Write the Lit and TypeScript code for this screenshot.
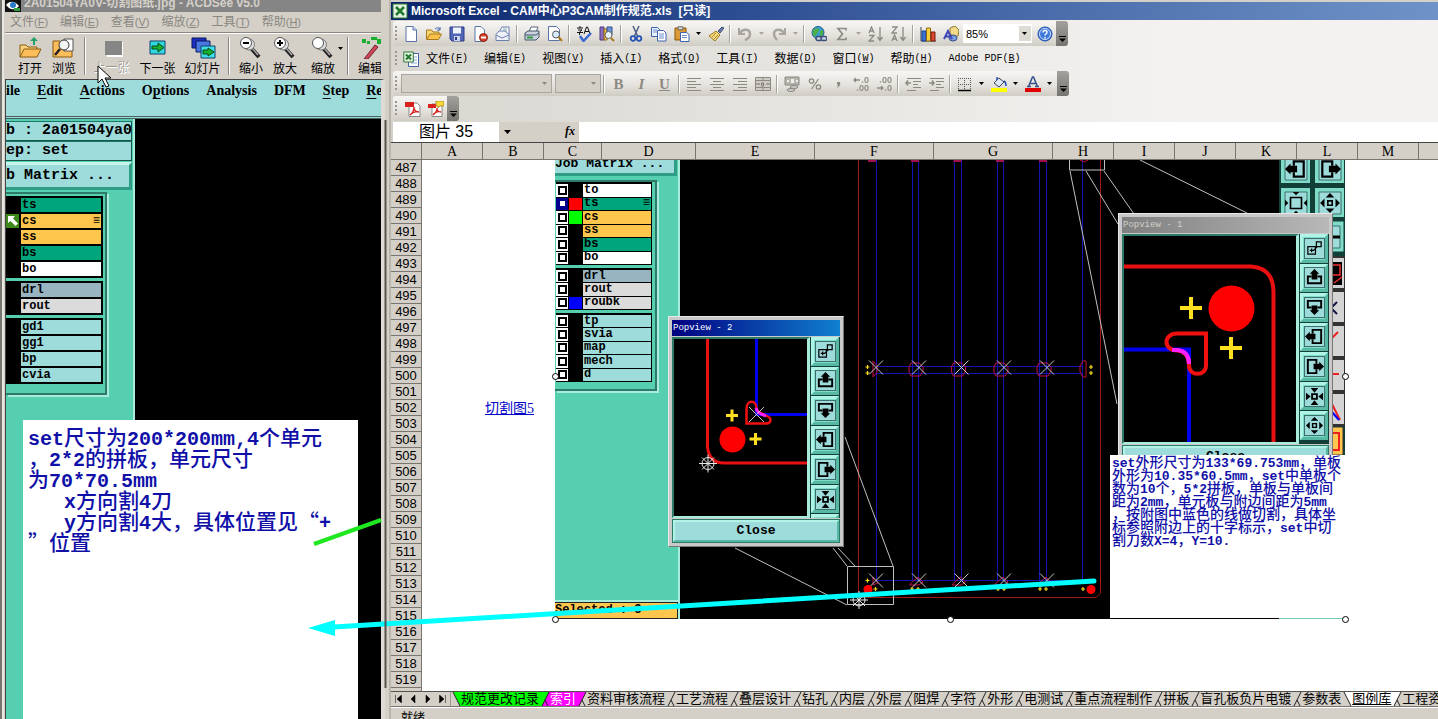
import { LitElement, html, svg, css, nothing } from "lit";
import type { TemplateResult } from "lit";
import { customElement, state } from "lit/decorators.js";
import { classMap } from "lit/directives/class-map.js";

type Layer = { name: string; tone: string; flag?: string; swatch?: string };

/* ---------- glyphs of the office toolbars, 16 x 16 ---------- */
const glyphs: Record<string, TemplateResult> = {
  new: svg`<path d="M3 .5h7l3.500 3.500v11.500H3z" fill="#fff" stroke="#5a74a8"/><path d="M10 .5V4h3.500" fill="#cfdcf2" stroke="#5a74a8"/>`,
  open: svg`<path d="M.5 13V4h5l1.500 2H13v3" fill="#f7d774" stroke="#a67a1c"/><path d="M.5 13.500L4 8h11.500l-3 5.500z" fill="#fbc14b" stroke="#a67a1c"/><path d="M9 3c2-2 4-1.500 5 1m0-3v3h-3" fill="none" stroke="#3a5fa8"/>`,
  save: svg`<path d="M1 1h14v14H3l-2-2z" fill="#5166b8" stroke="#2c3c86"/><path d="M4 1.500h8v6H4z" fill="#eef2fb"/><path d="M5 10h6v5H5z" fill="#ccd4ea"/><path d="M6 11h2v3H6z" fill="#2c3c86"/>`,
  permit: svg`<path d="M3 .5h6l3.500 3.500v11.500H3z" fill="#fff" stroke="#5a74a8"/><circle cx="11.500" cy="11.500" r="4" fill="#d6402a" stroke="#8f2010"/><path d="M9 11.500h5" stroke="#fff" stroke-width="2"/>`,
  mail: svg`<path d="M5 4.500L7 1h7v8" fill="#fff" stroke="#6a7fae"/><path d="M8 3h4M8 5h4" stroke="#8aa"/><path d="M1 8.500L4 5h6l4 3.500v6H1z" fill="#eef1f8" stroke="#6a7fae"/><path d="M1 9l6 3 7-3" fill="none" stroke="#6a7fae"/>`,
  print: svg`<path d="M5 6l2-5h7l-2 5" fill="#fff" stroke="#567"/><path d="M1 7l3-2h11v6l-3 3H1z" fill="#c9d3e0" stroke="#456"/><path d="M1 9h11l3-2" fill="none" stroke="#456"/><path d="M3 11.500h6" stroke="#2f9a3a" stroke-width="2"/>`,
  preview: svg`<path d="M1.500 .5h8l3 3v11h-11z" fill="#fff" stroke="#5a74a8"/><circle cx="9" cy="8.500" r="3.500" fill="#d8ecfa" stroke="#556"/><path d="M11.500 11l3.500 4" stroke="#a67a1c" stroke-width="2"/>`,
  spell: svg`<path d="M1 2h6M4 0v2M2 4h4L3.500 6v3M1 6.500h6" stroke="#111" fill="none"/><path d="M8 8l2.500-7h1L14 8M9 5.500h4" stroke="#111" fill="none"/><path d="M4 10l3.500 5L15 7" stroke="#3a6ad0" stroke-width="2.500" fill="none"/>`,
  research: svg`<path d="M1 1h4v13H1z" fill="#8a6bc0" stroke="#4b3a80"/><path d="M5 3h3v11H5z" fill="#f0c04a" stroke="#8f6a14"/><path d="M8 1h5v8H8z" fill="#6c93da" stroke="#34508c"/><circle cx="9.500" cy="9" r="3.500" fill="#e8f3fb" stroke="#665"/><path d="M12 12l3 3" stroke="#a67a1c" stroke-width="2"/>`,
  cut: svg`<path d="M5 0l4.500 10M11 0L6.500 10" stroke="#4b5f84" stroke-width="1.500"/><circle cx="5" cy="12.500" r="2.300" fill="none" stroke="#2450b4" stroke-width="1.700"/><circle cx="11" cy="12.500" r="2.300" fill="none" stroke="#2450b4" stroke-width="1.700"/>`,
  copy: svg`<path d="M.5 1.500h6l2 2v7h-8z" fill="#e9f0fc" stroke="#3f62ad"/><path d="M6.500 4.500h6l2.500 2.500v8H6.500z" fill="#fff" stroke="#3f62ad"/><path d="M8 8h5M8 10h5M8 12h5M2 4h4M2 6h4" stroke="#6d8fd0"/>`,
  paste: svg`<path d="M1 2h11v12H1z" fill="#dd9a35" stroke="#875509"/><path d="M4 .8h5v3H4z" fill="#d7d7d7" stroke="#666"/><path d="M6.500 6.500h6l2.500 2v7H6.500z" fill="#fff" stroke="#3f62ad"/><path d="M8 9.500h5M8 11.500h5" stroke="#6d8fd0"/>`,
  brush: svg`<path d="M10 5l4-4 2 1-4 5z" fill="#6a7fae" stroke="#3a4c78"/><path d="M1 10l7-5 4 4-5 6z" fill="#f3d77a" stroke="#9a7a24"/><path d="M4 11l4-4M6 13l4-4" stroke="#b48d2e"/>`,
  undo: svg`<path d="M2 2v6h6" fill="none" stroke="#a9a6a0" stroke-width="2"/><path d="M3 7c3-5 10-4 10 1 0 3-2 5-5 6" fill="none" stroke="#a9a6a0" stroke-width="2.500"/>`,
  redo: svg`<path d="M14 2v6H8" fill="none" stroke="#a9a6a0" stroke-width="2"/><path d="M13 7C10 2 3 3 3 8c0 3 2 5 3 6" fill="none" stroke="#a9a6a0" stroke-width="2.500"/>`,
  link: svg`<circle cx="7" cy="6.500" r="6" fill="#3c9fd0" stroke="#1d5c8a"/><path d="M3 3c3-2 6 0 5 2S5 8 4 11C1 8 1 5 3 3zM9 5l3-1v5l-3 1z" fill="#4bb04b"/><rect x="5" y="10.500" width="6" height="4" rx="2" fill="#c8cede" stroke="#3d4f78" stroke-width="1.500"/><rect x="10" y="10.500" width="6" height="4" rx="2" fill="#c8cede" stroke="#3d4f78" stroke-width="1.500"/>`,
  sum: svg`<path d="M12 4.500V2.500H4l4.500 5.500L4 13.500h8v-2" fill="none" stroke="#8d8a84" stroke-width="1.700"/>`,
  sortaz: svg`<path d="M1 7l2.500-6L6 7M2 5h3M1 9.500h5L1 15h5M12 1v13M9.500 11l2.500 3.500 2.500-3.500" fill="none" stroke="#8d8a84" stroke-width="1.300"/>`,
  sortza: svg`<path d="M1 1h5L1 7h5M1 15l2.500-6L6 15M2 13h3M12 1v13M9.500 11l2.500 3.500 2.500-3.500" fill="none" stroke="#8d8a84" stroke-width="1.300"/>`,
  chart: svg`<path d="M1 1v14h15" fill="none" stroke="#345" /><path d="M2 5h4v10H2z" fill="#3f72d8" stroke="#1d3f86"/><path d="M6.500 2h4v13h-4z" fill="#f7cf3c" stroke="#8f6a14"/><path d="M11 6h4v9h-4z" fill="#d8482e" stroke="#7c1f10"/>`,
  draw: svg`<path d="M7 2l5-2 4 4-1 6-5 1-3-4z" fill="#f2d98a" stroke="#8f7a34"/><ellipse cx="10" cy="12" rx="4" ry="3" fill="#7d9be0" stroke="#34508c"/><path d="M1 13l4-8 4 8M3 10.500h4" fill="none" stroke="#4048b8" stroke-width="2"/>`,
  help: svg`<circle cx="8" cy="8" r="7" fill="#3d78dc" stroke="#1e4fae"/><circle cx="8" cy="8" r="5.500" fill="none" stroke="#cfe0fb"/><path d="M6 6.500c0-3 4.500-2.500 4 0C9.800 8 8 8 8 9.500M8 11v1.500" fill="none" stroke="#fff" stroke-width="1.500"/>`,
  left: svg`<path d="M1 2.500h14M1 5.500h9M1 8.500h14M1 11.500h9M1 14.500h14" stroke="#8d8a84"/>`,
  center: svg`<path d="M1 2.500h14M4 5.500h8M1 8.500h14M4 11.500h8M1 14.500h14" stroke="#8d8a84"/>`,
  right: svg`<path d="M1 2.500h14M6 5.500h9M1 8.500h14M6 11.500h9M1 14.500h14" stroke="#8d8a84"/>`,
  merge: svg`<path d="M.5 1.500h15v13H.5zM.5 4.500h15M.5 11.500h15M8 1v3M8 12v3" fill="#cfccc5" stroke="#8d8a84"/><path d="M1 8h4M11 8h4M6.500 9.500V7h2v3H6.500" fill="none" stroke="#77746e"/>`,
  money: svg`<path d="M1 1h14v8H1z" fill="#b7b4ae" stroke="#8d8a84"/><path d="M3 4h2v2H3zM7 3h3v4H7zM12 4h2v2h-2z" fill="#eee"/><ellipse cx="10" cy="11" rx="4" ry="1.500" fill="#ccc" stroke="#8d8a84"/><ellipse cx="7" cy="14" rx="4" ry="1.500" fill="#ccc" stroke="#8d8a84"/>`,
  percent: svg`<circle cx="4.500" cy="5" r="2.200" fill="none" stroke="#8d8a84" stroke-width="1.300"/><circle cx="11.500" cy="11" r="2.200" fill="none" stroke="#8d8a84" stroke-width="1.300"/><path d="M11.500 3l-7 10" stroke="#8d8a84" stroke-width="1.300"/>`,
  comma: svg`<path d="M7 6h3c1 3-1 5-3 6 1-2 1-3 0-4z" fill="#8d8a84"/>`,
  moredec: svg`<path d="M7 4H1M3 2L1 4l2 2" fill="none" stroke="#8d8a84" stroke-width="1.300"/><circle cx="9.500" cy="6" r=".8" fill="#8d8a84"/><rect x="12" y="1.500" width="3" height="5" rx="1.500" fill="none" stroke="#8d8a84" stroke-width="1.200"/><circle cx="4.500" cy="14" r=".8" fill="#8d8a84"/><rect x="7" y="9.500" width="3" height="5" rx="1.500" fill="none" stroke="#8d8a84" stroke-width="1.200"/><rect x="12" y="9.500" width="3" height="5" rx="1.500" fill="none" stroke="#8d8a84" stroke-width="1.200"/>`,
  lessdec: svg`<circle cx="4.500" cy="6" r=".8" fill="#8d8a84"/><rect x="7" y="1.500" width="3" height="5" rx="1.500" fill="none" stroke="#8d8a84" stroke-width="1.200"/><rect x="12" y="1.500" width="3" height="5" rx="1.500" fill="none" stroke="#8d8a84" stroke-width="1.200"/><path d="M1 12h6M5 10l2 2-2 2" fill="none" stroke="#8d8a84" stroke-width="1.300"/><circle cx="9.500" cy="14" r=".8" fill="#8d8a84"/><rect x="12" y="9.500" width="3" height="5" rx="1.500" fill="none" stroke="#8d8a84" stroke-width="1.200"/>`,
  outdent: svg`<path d="M2 2.500h14M8 5.500h8M8 8.500h5M8 11.500h8M2 14.500h9" stroke="#8d8a84"/><path d="M6 7H1m2-2.500L1 7l2 2.500" fill="none" stroke="#8d8a84" stroke-width="1.500"/>`,
  indent: svg`<path d="M2 2.500h14M8 5.500h8M8 8.500h5M8 11.500h8M2 14.500h9" stroke="#8d8a84"/><path d="M1 7h5M4 4.500L6 7 4 9.500" fill="none" stroke="#8d8a84" stroke-width="1.500"/>`,
  borders: svg`<path d="M1.500 2v12M7.500 2v12M13.500 2v12M1 2.500h13M1 8.500h13" stroke="#555" stroke-dasharray="1 1"/><path d="M1 14.500h13" stroke="#000" stroke-width="1.500"/>`,
  fill: svg`<path d="M3 7l5-5 5 4-5 5z" fill="#dfe8f6" stroke="#345"/><path d="M6 4V1M13 5c2 1 2 3 2 5" stroke="#2450b4" stroke-width="1.500" fill="none"/><path d="M0 12h16v4H0z" fill="#ffff00"/>`,
  color: svg`<path d="M3.500 10.500L7.500 1h1l4 9.500M5 7.500h6M2 10.500h4M10 10.500h4" fill="none" stroke="#34508c" stroke-width="1.500"/><path d="M0 12h16v4H0z" fill="#e00000"/>`,
  pdf: svg`<path d="M4 2h8l3 3v10.500H4z" fill="#fff" stroke="#888"/><path d="M0 1h9v5H0z" fill="#d8201c"/><path d="M5 14c3-2 4-5 4-8 0 3 2 5 5 5-3-1-6 0-9 3z" fill="none" stroke="#d8201c" stroke-width="1.300"/>`,
  pdfmail: svg`<path d="M4 3h8l2 3v9.500H4z" fill="#fff" stroke="#888"/><path d="M0 3h8v4H0z" fill="#d8201c"/><path d="M5 14c3-2 4-5 4-7 0 3 2 4 4 4-3-1-6 0-8 3z" fill="none" stroke="#d8201c" stroke-width="1.300"/><path d="M8 0h8v5h-4l-2 2V5H8z" fill="#f8d838" stroke="#a8841c" stroke-width=".8"/>`,
  excel: svg`<path d="M1 1h14v14H1z" fill="#e6f2e2" stroke="#2f7a34"/><path d="M4 4l8 8M12 4l-8 8" stroke="#1f7a2c" stroke-width="2.500"/>`,
  workbook: svg`<path d="M5.500 2.500h10v13h-10z" fill="#fff" stroke="#4464a8"/><path d="M10 6h4M10 9h4M8 12h6" stroke="#8aa4d8"/><path d="M.8 1h9.500v10H.8z" fill="#e6f2e2" stroke="#2f7a34"/><path d="M3 3.500l5 5M8 3.500l-5 5" stroke="#1f7a2c" stroke-width="2"/>`,
};

const icon = (name: string) => html`<svg class="icon" viewBox="0 0 16 16" aria-hidden="true">${glyphs[name]}</svg>`;
const caret = html`<svg class="caret" viewBox="0 0 5 3" aria-hidden="true"><path d="M0 0h5L2.500 3z" fill="currentColor" /></svg>`;

/* ---------- viewer toolbar glyphs, 26 x 22 ---------- */
const lens = svg`<path d="M13 11l8 9" stroke="#222" stroke-width="4"/><path d="M14 11l6 7" stroke="#aaa" stroke-width="1.500"/><circle cx="11" cy="7.500" r="5.500" fill="#ddd" stroke="#777"/><circle cx="8" cy="6" r="5.500" fill="#fff" stroke="#555"/>`;
const viewerGlyphs: Record<string, TemplateResult> = {
  open: svg`<path d="M3 20V8h6l2 2h9v4" fill="#f9d37a" stroke="#8a5a10"/><path d="M3 20l4-8h17l-4 8z" fill="#fdbd5a" stroke="#8a5a10"/><path d="M16 8V4h-3l4-4 4 4h-3v4z" fill="#28a06a"/>`,
  browse: svg`<path d="M2 20V4h7l2 2h10v14z" fill="#fdbd5a" stroke="#8a5a10"/><path d="M13 2h9v12h-9z" fill="#fff" stroke="#555"/><circle cx="13" cy="8" r="5" fill="#f4f4f4" stroke="#333"/><path d="M9 12l-5 6" stroke="#222" stroke-width="2.500"/>`,
  prev: svg`<path d="M6 5h17v15H7z" fill="#fff"/><path d="M5 4h17v14H5z" fill="#868686"/>`,
  next: svg`<path d="M5 4h15v13H5z" fill="#30d8e0" stroke="#163c6a"/><path d="M7 9h6V6l6 4.500-6 4.500v-3H7z" fill="#18b030" stroke="#064c14"/>`,
  slides: svg`<path d="M2 1h14v10H2z" fill="#1c30c0" stroke="#0a1560"/><path d="M6 4h14v11H6z" fill="#4878e0" stroke="#0a1560"/><path d="M11 9h14v12H11z" fill="#40e0e8" stroke="#163c6a"/><path d="M13 13h5v-2l6 4-6 4v-2h-5z" fill="#18b030" stroke="#064c14"/>`,
  minus: svg`${lens}<path d="M5 6h6" stroke="#000" stroke-width="2"/>`,
  plus: svg`${lens}<path d="M5 6h6M8 3v6" stroke="#000" stroke-width="2"/>`,
  zoom: svg`${lens}`,
  edit: svg`<path d="M7 22L18 8l3 2L11 22z" fill="#d04858" stroke="#702030"/><path d="M5 2h4v4H5zM10 4h3v3h-3zM14 0h6v3h-6zM20 2h4v5h-4z" fill="#18b030"/>`,
};

/* ---------- CAM tool buttons, 20 x 20 ---------- */
const arrowGlyphs: Record<string, TemplateResult> = {
  copy: svg`<path d="M3 8h8v8H3zM12 3h5v5h-5zM5 12h4l4-4M7 10v4" fill="none" stroke="#000" stroke-width="1.300"/>`,
  up: svg`<path d="M7 9H3v7h14V9h-4" fill="none" stroke="#000" stroke-width="2"/><path d="M10 1l5 5h-2v6H7V6H5z"/>`,
  down: svg`<path d="M7 10H3V3h14v7h-4" fill="none" stroke="#000" stroke-width="2"/><path d="M10 18l5-5h-2V8H7v5H5z"/>`,
  left: svg`<path d="M8 7V3h9v14H8v-4" fill="none" stroke="#000" stroke-width="2"/><path d="M0 10l5-5v2h6v6H5v2z"/>`,
  right: svg`<path d="M12 7V3H3v14h9v-4" fill="none" stroke="#000" stroke-width="2"/><path d="M20 10l-5-5v2H9v6h6v2z"/>`,
  in: svg`<path d="M7.500 7.500h5v5h-5z" fill="none" stroke="#000" stroke-width="2"/><path d="M10 6L6 1h8zM10 14l-4 5h8zM6 10L1 6v8zM14 10l5-4v8z"/>`,
  out: svg`<path d="M8 8h4v4H8z" fill="none" stroke="#000" stroke-width="1.500"/><path d="M10 1l4 4H6zM10 19l4-4H6zM1 10l4-4v8zM19 10l-4-4v8z"/>`,
  frame: svg`<path d="M5 5h10v10H5z" fill="none" stroke="#000" stroke-width="1.500"/><path d="M10 3L7 0h6zM10 17l-3 3h6zM3 10L0 7v6zM17 10l3-3v6z"/>`,
};
const sideTools = ["copy", "up", "down", "left", "right", "in", "out"];

const sheets = ["规范更改记录", "索引", "资料审核流程", "工艺流程", "叠层设计", "钻孔", "内层", "外层", "阻焊", "字符", "外形", "电测试", "重点流程制作", "拼板", "盲孔板负片电镀", "参数表", "图例库", "工程资料"];
const columns: [string, number][] = [["A", 61], ["B", 61], ["C", 58], ["D", 94], ["E", 119], ["F", 119], ["G", 119], ["H", 61], ["I", 61], ["J", 61], ["K", 61], ["L", 61], ["M", 61], ["", 61]];
const rows = Array.from({ length: 34 }, (_, i) => 487 + i);

const viewLayers: Layer[][] = [
  [{ name: "ts", tone: "green" }, { name: "cs", tone: "amber", flag: "≡" }, { name: "ss", tone: "amber" }, { name: "bs", tone: "green" }, { name: "bo", tone: "white" }],
  [{ name: "drl", tone: "slate" }, { name: "rout", tone: "grey" }],
  [{ name: "gd1", tone: "aqua" }, { name: "gg1", tone: "aqua" }, { name: "bp", tone: "aqua" }, { name: "cvia", tone: "aqua" }],
];
const shotLayers: Layer[][] = [
  [{ name: "to", tone: "white" }, { name: "ts", tone: "green", flag: "≡", swatch: "red" }, { name: "cs", tone: "amber", swatch: "lime" }, { name: "ss", tone: "amber" }, { name: "bs", tone: "green" }, { name: "bo", tone: "white" }],
  [{ name: "drl", tone: "slate" }, { name: "rout", tone: "grey" }, { name: "roubk", tone: "grey", swatch: "blue" }],
  [{ name: "tp", tone: "aqua" }, { name: "svia", tone: "aqua" }, { name: "map", tone: "aqua" }, { name: "mech", tone: "aqua" }, { name: "d", tone: "aqua" }],
];

const memoLines = ["set尺寸为200*200mm,4个单元", "，2*2的拼板，单元尺寸", "为70*70.5mm", "   x方向割4刀", "   y方向割4大，具体位置见“+", "”位置"];
const noteLines = ["set外形尺寸为133*69.753mm，单板", "外形为10.35*60.5mm，set中单板个", "数为10个，5*2拼板，单板与单板间", "距为2mm，单元板与附边间距为5mm", "，按附图中蓝色的线做切割，具体坐", "标参照附边上的十字标示，set中切", "割刀数X=4，Y=10."];

/* Latin runs are set in a narrower monospaced face than the Chinese around them. */
const mixed = (line: string) => line.split(/([\x20-\x7e]+)/).filter(Boolean).map((part) => (/^[\x20-\x7e]/.test(part) ? html`<span class="latin">${part}</span>` : part));

const cross = (x: number, y: number, r: number) => svg`<path d="M${x - r} ${y - r}l${2 * r} ${2 * r}M${x + r} ${y - r}l${-2 * r} ${2 * r}" stroke="#c8c8c8" fill="none"/>`;
const plus = (x: number, y: number, r: number, w: number) => svg`<path d="M${x - r} ${y}h${2 * r}M${x} ${y - r}v${2 * r}" stroke="#ffe020" stroke-width=${w} fill="none"/>`;
const target = (x: number, y: number) => svg`<g stroke="#e8e8e8" fill="none"><circle cx=${x} cy=${y} r="6"/><path d="M${x - 9} ${y}h18M${x} ${y - 9}v18M${x - 6} ${y - 6}l12 12M${x + 6} ${y - 6}l-12 12"/></g>`;

@customElement("app-root")
export class AppRoot extends LitElement {
  @state() private sheet = "图例库";

  static styles = css`
    :host { display: block; height: 100vh; min-height: 400px; overflow: hidden; position: relative; background: #d4d0c8; color: #000; font: 12px/16px "Liberation Serif", "Noto Sans CJK SC", serif; }
    *, *::before, *::after { box-sizing: border-box; }
    button { font: inherit; color: inherit; border: 0; background: none; padding: 0; margin: 0; }
    input, select { font: inherit; margin: 0; border-radius: 0; appearance: none; }
    svg { display: block; }
    .desk { display: grid; grid-template-columns: 389px minmax(0, 1fr); height: 100%; }
    .win { min-width: 0; min-height: 0; height: 100%; display: flex; flex-direction: column; overflow: hidden; }

    /* image viewer */
    .viewer { border-left: 2px solid #77756f; background: linear-gradient(90deg, #e8e6e0 2px, #d4d0c8 2px); padding-left: 3px; }
    .viewer-title { flex: none; height: 12px; margin-right: 8px; background: #858585; color: #d4d0c8; font: bold 12px/16px "Liberation Sans", "Noto Sans CJK SC", sans-serif; display: flex; align-items: flex-end; gap: 3px; white-space: pre; overflow: hidden; }
    .viewer-title span { line-height: 18px; }
    .viewer-menu { flex: none; display: flex; height: 20px; align-items: center; gap: 12px; padding-left: 5px; color: #8a8780; font: 11px/16px "Liberation Sans", "Noto Sans CJK SC", sans-serif; }
    .viewer-menu b { font-weight: 400; font-size: 12px; }
    .viewer-tools { flex: none; display: flex; height: 47px; border-top: 1px solid #8a8780; box-shadow: inset 0 1px #fff; margin-right: 8px; padding: 4px 0 0 8px; overflow: hidden; }
    .vt { flex: none; width: 34px; display: flex; flex-direction: column; align-items: center; gap: 2px; white-space: nowrap; position: relative; }
    .vt.wide { width: 45px; }
    .vt.drop { width: 42px; }
    .vt.drop .caret { position: absolute; right: 1px; top: 10px; }
    .vt.off { color: #fff; text-shadow: -1px -1px #9a978f; }
    .vt > svg:first-child { width: 26px; height: 22px; }
    .rule { flex: none; width: 2px; margin: 0 4px 4px 3px; background: linear-gradient(90deg, #8a8780 1px, #fff 1px); }
    .viewer-body { flex: 1; min-height: 0; display: flex; margin-right: 4px; border-right: 4px solid #dedbd5; border-left: 1px solid #444; border-top: 1px solid #444; position: relative; flex-direction: column; background: #000; overflow: hidden; }
    .cam-menu { flex: none; height: 39px; background: #9edbdb; border-bottom: 3px double #46605f; padding: 2px 0 0 0; display: flex; gap: 17px; font: bold 14px/18px "Liberation Serif", serif; white-space: nowrap; overflow: hidden; }
    .cam-menu u { text-underline-offset: 3px; }
    .cam-side { flex: 1; min-height: 0; width: 129px; background: #55cfaf; border-right: 2px solid #a9ecdc; overflow: hidden; font: bold 15px/18px "Liberation Mono", monospace; padding-top: 2px; }
    .field { height: 20px; background: #9edbdb; border: 1px solid #14564a; border-left: 0; border-top-color: #1c7866; margin-right: 1px; display: flex; align-items: center; overflow: hidden; white-space: pre; }
    .matrix { display: block; width: 126px; height: 28px; margin: 1px 0 2px; background: #9edbdb; border: 3px solid #2f9c86; border-top-color: #c6f6ec; border-left: 0; text-align: left; font: inherit; white-space: pre; overflow: hidden; }
    .stack { display: flex; flex-direction: column; gap: 3px; border: 2px solid #2d7a69; border-left: 0; padding: 2px 2px 9px 0; width: 101px; box-shadow: 2px 2px #a9ecdc; font: bold 12px/12px "Liberation Mono", monospace; }
    .group { background: #000; padding: 1px 1px 1px 0; }
    .row { display: grid; grid-template-columns: 15px 1fr; height: 16px; padding: 1px; padding-left: 0; }
    .tag { display: flex; justify-content: space-between; padding: 0 1px; overflow: hidden; align-items: center; }
    .green { background: #00a57b; } .amber { background: #ffc64e; } .white { background: #fff; } .slate { background: #98b4c0; } .grey { background: #dbdbdb; } .aqua { background: #9edbdb; }
    .mark { background: #3d8818; width: 13px; height: 14px; }
    .memo { position: absolute; left: 17px; top: 340px; width: 335px; bottom: 0; background: #fff; color: #1010a8; font: 500 21px/21px "Noto Sans CJK SC", sans-serif; white-space: pre; padding: 6px 0 0 5px; }
    .memo p { margin: 0; height: 21px; }
    .latin { font-family: "Liberation Mono", monospace; font-weight: 700; }
    .memo .latin { font-size: 20px; }
    .note .latin { font-size: 13px; }

    /* spreadsheet window */
    .excel { border-left: 2px solid #b8b4ac; padding-top: 2px; background: #d4d0c8; }
    .x-title { flex: none; height: 18px; display: flex; align-items: center; gap: 3px; padding-left: 1px; background: linear-gradient(90deg, #0a246a, #2a4a90 30%, #6f93c8); color: #fff; font: bold 12px/18px "Liberation Sans", "Noto Sans CJK SC", sans-serif; white-space: pre; }
    .dock { flex: none; background: linear-gradient(90deg, #d9d6d0, #f3f2f0 75%); padding: 1px 2px; }
    .icon { width: 16px; height: 16px; flex: none; }
    .bar { display: flex; height: 25px; width: max-content; padding-left: 6px; border-radius: 3px; background: linear-gradient(#f7f6f4, #e4e1dc 60%, #cfccc4); position: relative; align-items: center; }
    .bar::before { content: ""; position: absolute; left: 2px; top: 5px; width: 2px; height: 15px; background: repeating-linear-gradient(#9c9890 0 2px, transparent 2px 4px); }
    .bar.plain { background: none; }
    .bar.format, .bar.pdf { padding-left: 8px; }
    .bar.format .cap { margin-left: 2px; }
    .tb { flex: none; width: 23px; height: 23px; display: grid; place-items: center; color: #8d8a84; font: bold 15px/20px "Liberation Serif", serif; }
    .dd { flex: none; width: 11px; height: 23px; display: grid; place-items: center; color: #000; }
    .dd.off { color: #a9a6a0; }
    .caret { width: 5px; height: 3px; }
    .sep { flex: none; width: 6px; height: 18px; background: linear-gradient(90deg, transparent 2px, #a5a29a 2px 3px, #fff 3px 4px, transparent 4px); }
    .cap { flex: none; width: 12px; height: 25px; background: linear-gradient(#a3a19c, #77756f); border-radius: 0 3px 3px 0; display: flex; align-items: flex-end; justify-content: center; padding-bottom: 4px; color: #000; }
    .cap svg { width: 7px; height: 6px; }
    .box { position: relative; display: flex; align-items: center; height: 19px; border: 1px solid #a9a6a0; background: #d4d0c8; margin-right: 3px; }
    .box select { width: 100%; height: 100%; border: 0; background: none; padding: 0 2px; outline: 0; color: inherit; font: 11px/14px "Liberation Sans", sans-serif; }
    .box .caret { position: absolute; right: 4px; pointer-events: none; color: #8d8a84; }
    .box.font { width: 151px; }
    .box.size { width: 46px; margin-right: 0; }
    .box.zoom { width: 69px; background: #fff; border: 1px solid #fff; margin: 0 1px; }
    .box.zoom .caret { color: #000; z-index: 1; }
    .box.zoom::after { content: ""; position: absolute; right: 0; width: 12px; height: 15px; background: #dedbd5; }
    .menu { display: flex; gap: 16px; padding-left: 4px; }
    .menu button { display: flex; align-items: center; white-space: pre; }
    .menu .key { font: 10px/16px "Liberation Mono", monospace; }
    .formula { flex: none; display: flex; height: 20px; align-items: stretch; background: #d4d0c8; padding-left: 2px; font-size: 16px; }
    .namebox { width: 106px; border: 0; padding: 0; text-align: center; background: #fff; font: 16px/18px "Liberation Sans", "Noto Sans CJK SC", sans-serif; }
    .name-dd { width: 16px; display: grid; place-items: center; }
    .name-dd svg { width: 7px; height: 4px; }
    .fx { margin-left: 50px; width: 14px; font: italic bold 12px/18px "Liberation Serif", serif; }
    .fx-input { flex: 1; min-width: 0; border: 0; background: #fff; }
    .sheet { flex: 1; min-height: 0; position: relative; overflow: hidden; background: #fff; border-top: 1px solid #444; }
    table { border-collapse: separate; border-spacing: 0; table-layout: fixed; width: 100%; min-width: 1088px; }
    th { font: 13px/15px "Liberation Sans", sans-serif; background: #d4d0c8; padding: 0; height: 16px; border-right: 1px solid #77756f; border-bottom: 1px solid #77756f; overflow: hidden; }
    thead th { height: 17px; font: 14px/16px "Liberation Serif", serif; padding-top: 1px; line-height: 15px; }
    td { padding: 0 0 0 2px; height: 16px; font: 14px/15px "Liberation Serif", "Noto Sans CJK SC", serif; white-space: nowrap; }
    td a { color: #0000c8; text-decoration: underline; display: block; height: 15px; }

    .shot { position: absolute; left: 164px; top: 17px; width: 790px; height: 459px; background: #000; }
    .art { position: absolute; left: 0; top: 0; width: 790px; height: 459px; overflow: visible; }
    .shot-side { position: absolute; left: 0; top: 0; bottom: 0; width: 125px; background: #55cfaf; border-right: 2px solid #a9ecdc; overflow: hidden; display: flex; flex-direction: column; }
    .shot-side .matrix { flex: none; width: 122px; height: 16px; margin: 0 0 4px; padding: 0; font: bold 13px/8px "Liberation Mono", monospace; border-top: 0; border-bottom-width: 3px; padding-bottom: 6px; }
    .shot-side .stack { width: 102px; padding: 0 3px 7px 1px; gap: 3px; }
    .shot-side .group { display: grid; grid-auto-rows: 1fr; padding: 1px 0; }
    .n6 { height: 83px; } .n3 { height: 42px; } .n5 { height: 69px; }
    .shot-side .row { height: auto; min-height: 0; grid-template-columns: 12px 13px 1fr; gap: 1px; padding: 1px 1px 0 0; line-height: 11px; }
    .pick { width: 12px; height: 100%; background: #fff; border: 0; display: grid; place-items: center; }
    .pick::before { content: ""; width: 9px; height: 9px; border: 2px solid #000; background: #fff; }
    .pick:checked { background: #00008c; }
    .pick:checked::before { border-color: #00008c; }
    .swatch.red { background: #f00; } .swatch.lime { background: #0f0; } .swatch.blue { background: #00f; }
    .selected { margin-top: auto; height: 17px; background: #ffc64e; border: 1px solid #222; border-left: 0; font: bold 12px/14px "Liberation Mono", monospace; white-space: pre; box-shadow: 0 -2px #a9ecdc; }

    .pop { position: absolute; display: grid; grid-template-rows: 16px 1fr 24px; grid-template-columns: 1fr 30px; padding: 3px; background: #c9c9c9; border: 1px solid #e8e8e8; border-right-color: #777; border-bottom-color: #777; row-gap: 1px; }
    .pop.two { left: 113px; top: 156px; width: 176px; height: 231px; }
    .pop.one { left: 563px; top: 53px; width: 215px; height: 260px; }
    .pop-title { grid-column: 1 / 3; background: linear-gradient(90deg, #000080, #1080d0); color: #fff; font: 9px/16px "Liberation Mono", monospace; white-space: pre; padding-left: 1px; }
    .one .pop-title { background: linear-gradient(90deg, #808080, #b8b8b8); color: #d4d0c8; }
    .pop-canvas { background: #000; border: 2px solid #2d7a69; border-right: 3px solid #a9ecdc; border-bottom-color: #a9ecdc; overflow: hidden; min-width: 0; min-height: 0; }
    .pop-tools { overflow: hidden; min-height: 0; background: #123f38; }
    .pop-strip { display: grid; grid-template-rows: repeat(7, 1fr); height: 206px; row-gap: 1px; padding: 0 1px; }
    .gen { background: #7fdcc8; border: 3px solid #57b8a4; border-top-color: #b0f4e8; border-left-color: #b0f4e8; display: grid; place-items: center; min-height: 0; }
    .gen svg { width: 19px; height: 19px; background: #9edbdb; box-shadow: 0 0 0 1px #3c6f6a; }
    .close { grid-column: 1 / 3; background: #9edbdb; border: 3px solid #57b8a4; border-top-color: #b0f4e8; border-left-color: #b0f4e8; outline: 1px solid #2d7a69; outline-offset: -1px; font: bold 13px/14px "Liberation Mono", monospace; }
    .note { position: absolute; left: 555px; top: 295px; width: 235px; height: 163px; background: #fff; color: #1010a8; font: 500 14px/13px "Noto Sans CJK SC", sans-serif; padding-left: 2px; white-space: pre; }
    .note p { margin: 0; height: 13px; }

    .tabs { flex: none; display: flex; height: 16px; border-top: 1px solid #55534d; border-bottom: 1px solid #77756f; background: #d4d0c8; overflow: hidden; font: 13px/14px "Liberation Serif", "Noto Sans CJK SC", serif; }
    .nav { flex: none; width: 60px; display: flex; justify-content: space-between; align-items: center; padding: 0 4px; border-right: 1px solid #9c9890; }
    .nav svg { width: 7px; height: 8px; }
    .tab { flex: none; padding: 0 1px 0 10px; white-space: nowrap; background: #d4d0c8; position: relative; height: 14px; line-height: 14px; }
    .tab svg { position: absolute; left: 0; top: 0; width: 10px; height: 14px; }
    .tab.index { color: #fff; background: #ff00ff; }
    .tab.record { background: #00ff00; }
    .tab.active { background: #fff; text-decoration: underline; }
    .status { flex: none; height: 12px; overflow: hidden; border-top: 1px solid #fff; padding: 2px 0 0 10px; line-height: 16px; }
    .arrows { position: absolute; left: 0; top: 0; width: 100%; height: 100%; pointer-events: none; }
  `;

  private tb(name: string) {
    return html`<button class="tb" title=${name}>${icon(name)}</button>`;
  }
  private dd(off = false) {
    return html`<button class=${classMap({ dd: true, off })} aria-label="more">${caret}</button>`;
  }
  private sep = html`<span class="sep"></span>`;
  private cap = html`<button class="cap" aria-label="options"><svg viewBox="0 0 7 6"><path d="M0 .5h7" stroke="#000" /><path d="M0 2.500h7L3.500 6z" /></svg></button>`;

  private viewTool(glyph: string, label: string, kind = "") {
    return html`<button class="vt ${kind}"><svg viewBox="0 0 26 22">${viewerGlyphs[glyph]}</svg><span>${label}</span>${kind === "drop" ? caret : nothing}</button>`;
  }

  private viewer() {
    return html`<section class="win viewer">
      <header class="viewer-title">
        <svg width="16" height="12" viewBox="0 0 16 12"><path d="M0 0h16v12H0z" fill="#111" /><path d="M1 5c4-5 9-4 13 1-5 5-9 4-13-1z" fill="#fff" /><circle cx="8" cy="5" r="3" fill="#2878c8" /><path d="M9 8h6v3H9z" fill="#30a040" /></svg>
        <span>2A01504YA0V-切割图纸.jpg - ACDSee v5.0</span>
      </header>
      <nav class="viewer-menu">
        ${[["文件", "F"], ["编辑", "E"], ["查看", "V"], ["缩放", "Z"], ["工具", "T"], ["帮助", "H"]].map(([t, k]) => html`<button><b>${t}</b>(<u>${k}</u>)</button>`)}
      </nav>
      <div class="viewer-tools">
        ${this.viewTool("open", "打开")}${this.viewTool("browse", "浏览")}<span class="rule"></span>
        ${this.viewTool("prev", "上一张", "wide off")}${this.viewTool("next", "下一张", "wide")}${this.viewTool("slides", "幻灯片", "wide")}<span class="rule"></span>
        ${this.viewTool("minus", "缩小")}${this.viewTool("plus", "放大")}${this.viewTool("zoom", "缩放", "drop")}<span class="rule"></span>
        ${this.viewTool("edit", "编辑")}
      </div>
      <div class="viewer-body">
        <nav class="cam-menu">
          <span>ile</span><span><u>E</u>dit</span><span><u>A</u>ctions</span><span>O<u>p</u>tions</span><span>Analysis</span><span>DFM</span><span><u>S</u>tep</span><span><u>R</u>e</span>
        </nav>
        <div class="cam-side">
          <div class="field">b : 2a01504ya0</div>
          <div class="field">ep: set</div>
          <button class="matrix">b Matrix ...</button>
          <div class="stack">
            ${viewLayers.map((g) => html`<div class="group">${g.map((l) => html`<div class="row">
              ${l.name === "cs" ? html`<svg class="mark" viewBox="0 0 13 14"><path d="M2 2h7L7 4.500l5 5-2.500 2.500-5-5L2 9z" fill="#fff" /></svg>` : html`<span></span>`}
              <span class="tag ${l.tone}"><span>${l.name}</span><span>${l.flag ?? nothing}</span></span></div>`)}</div>`)}
          </div>
        </div>
        <div class="memo">${memoLines.map((t) => html`<p>${mixed(t)}</p>`)}</div>
      </div>
    </section>`;
  }

  private popview(n: 1 | 2) {
    return html`<div class="pop ${n === 1 ? "one" : "two"}">
      <div class="pop-title">Popview - ${n}</div>
      <div class="pop-canvas">${n === 1
        ? html`<svg width="174" height="208" viewBox="1124 236 174 208" fill="none" stroke-width="4">
            <path d="M1123 266.500H1251Q1273.500 268 1273.500 292V444" stroke="#e81010" />
            <path d="M1123 349.500H1189V444" stroke="#0000f0" />
            <path d="M1187 333.500h19v32c0 11-17 11-17 0 0-10-6-15-12-15-14 0-14-17 0-17z" stroke="#f01010" />
            <path d="M1172 350h6c7 1 11 6 11 14" stroke="#ff20ff" />
            <circle cx="1231.500" cy="308.500" r="23" fill="#f00" />
            ${plus(1191, 308, 11, 4)}${plus(1231, 348, 11, 4)}
          </svg>`
        : html`<svg width="134" height="182" viewBox="674 339 134 182" fill="none">
            <path d="M707.500 339V447Q709 463 724 463H808" stroke="#e81010" stroke-width="3" />
            <path d="M756.500 339V414.500H808" stroke="#0000f0" stroke-width="3" />
            <path d="M746.500 423.500v-15c0-9 10-9 10 0 0 6 14 6 14 11 0 4-3 4-6 4z" stroke="#f01010" stroke-width="2.500" />
            <path d="M756 408c1 5 5 6 10 8" stroke="#ff20ff" stroke-width="3" />
            <circle cx="732.500" cy="439.500" r="13" fill="#f00" />
            ${plus(732, 415.5, 6, 3)}${plus(755.5, 439, 6, 3)}${cross(756.5, 414.5, 7.5)}${target(708, 463.5)}
          </svg>`}</div>
      <div class="pop-tools"><div class="pop-strip">${sideTools.map((k) => html`<button class="gen" aria-label=${k}><svg viewBox="0 0 20 20">${arrowGlyphs[k]}</svg></button>`)}</div></div>
      <button class="close">Close</button>
    </div>`;
  }

  private art() {
    const xs = [876, 919, 961.5, 1004, 1047];
    const teal = (x: number, y: number, k: string) => svg`<g transform="translate(${x} ${y})"><path d="M0 0h31v31H0z" fill="#7fdcc8" stroke="#123f38" stroke-width="2"/><path d="M5 5h22v22H5z" fill="#9edbdb" stroke="#3c6f6a"/><g transform="translate(5 5) scale(1.100)" fill="#000">${arrowGlyphs[k]}</g></g>`;
    return html`<svg class="art" viewBox="555 160 790 459" fill="none">
      <defs><clipPath id="frame"><path d="M555 160h790v459H555z" /></clipPath></defs>
      <g clip-path="url(#frame)">
        <path d="M858.500 160V597.500H1096l4.500-4V160" stroke="#a01818" />
        <path d="M876.500 160V581M912.500 160V581M918.500 160V581M954.500 160V581M961.500 160V581M997.500 160V581M1003.500 160V581M1039.500 160V581M1046.500 160V581M1082.500 160V581M876 366.500H1082M876 373.500H1082M876 580.500H1082" stroke="#1414b4" />
        ${xs.map((x, i) => svg`<path d=${i ? `M${x - 8} 363h8l4 4v4l-3 5h-9l-2-4v-5zM${x - 9} 584l8-7 5 5-4 3h-9z` : "M873 361l4 5v6l-4 5zM873 585v-8l5 6z"} stroke="#c01048"/>${cross(x, 367.5, 7)}${cross(x, 580.5, 7)}<path d="M${x - 8} 161h8" stroke="#a0104c" stroke-width="2"/>`)}
        <path d="M1086 361h-3l-3 5v6l3 5h3zM1080 160l4 2 4-2" stroke="#c01030" />
        ${[[867.5, 367], [867.5, 373], [1091, 367], [1091, 373], [867.5, 580.5], [875.5, 589], [912, 589], [918, 589], [998, 589], [1004, 589], [1040, 589], [1046, 589], [1083, 589]].map(([x, y]) => plus(x, y, 2, 1.2))}
        <circle cx="868" cy="589.500" r="4.500" fill="#f00" /><circle cx="1091" cy="589.500" r="4.500" fill="#f00" />
        <path d="M847.500 566.500h46v38h-46zM845 437l48 129M735 548l112 57M833 548l14 18M838 548l17 18M1069.500 160v10h35v-10M1086 171l32 53M1104 171l30 43M1140 160l107 53M1070 171l47 233" stroke="#c0c0c0" />
        ${target(859, 600)}
        <path d="M1279 160h66v295h-66z" fill="#123f38" />
        ${teal(1280, 153, "left")}${teal(1314, 153, "right")}${teal(1280, 187, "frame")}${teal(1314, 187, "out")}
        <path d="M1314 221h30v31h-30z" fill="#7fdcc8" stroke="#123f38" /><path d="M1316 226h24v22h-24z" fill="#9edbdb" stroke="#3c6f6a" /><path d="M1320 237h20" stroke="#000" stroke-width="3" />
        ${[257, 291, 325, 359, 393].map((y) => svg`<path d="M1316 ${y}h29v32h-29z" fill="#d4d4d4" stroke="#333" stroke-width="2"/>`)}
        <path d="M1332 262h10v23h-10z" fill="#000" /><path d="M1332 265h8v10h-8M1334 283l8-6" stroke="#f03030" stroke-width="1.500" />
        <path d="M1337 302l-6 6 6 6" stroke="#114" stroke-width="2" /><path d="M1338 332l-8 8M1331 374h8M1331 402l9 18" stroke="#f02020" stroke-width="2" /><path d="M1332 412l7 8" stroke="#00f" stroke-width="2" />
        <path d="M1316 427h27v28h-27z" fill="#ffc64e" stroke="#333" /><path d="M1330 433h9v17h-9" stroke="#f02020" stroke-width="2" />
      </g>
    </svg>`;
  }

  private shot() {
    return html`<div class="shot">
      ${this.art()}
      <div class="shot-side">
        <button class="matrix">Job Matrix ...</button>
        <div class="stack">
          ${shotLayers.map((g) => html`<div class="group n${g.length}">${g.map((l) => html`<label class="row">
            <input class="pick" type="checkbox" .checked=${l.swatch === "red"} />
            <span class="swatch ${l.swatch ?? ""}"></span>
            <span class="tag ${l.tone}"><span>${l.name}</span><span>${l.flag ?? nothing}</span></span></label>`)}</div>`)}
        </div>
        <div class="selected">Selected : 3</div>
      </div>
      ${this.popview(2)}${this.popview(1)}
      <div class="note">${noteLines.map((t) => html`<p>${mixed(t)}</p>`)}</div>
      <svg class="art" viewBox="555 160 790 459">
        <path d="M1279 618.500h66" stroke="#78c8b8" />
        ${[[555.5, 376.5], [1345.5, 376.5], [555.5, 619.5], [950.5, 619.5], [1345.5, 619.5]].map(([x, y]) => svg`<circle cx=${x} cy=${y} r="3" fill="#fff" stroke="#000"/>`)}
      </svg>
    </div>`;
  }

  private excel() {
    const s = this.sep;
    const menu = [["文件", "(F)"], ["编辑", "(E)"], ["视图", "(V)"], ["插入", "(I)"], ["格式", "(O)"], ["工具", "(T)"], ["数据", "(D)"], ["窗口", "(W)"], ["帮助", "(H)"], ["", "Adobe PDF(B)"]];
    const tones = ["#d4d0c8", "#00ff00", "#ff00ff"];
    return html`<section class="win excel">
      <header class="x-title">${icon("excel")}<span>Microsoft Excel - CAM中心P3CAM制作规范.xls  [只读]</span></header>
      <div class="dock">
        <div class="bar">
          ${["new", "open", "save", "permit", "mail"].map((n) => this.tb(n))}${s}${this.tb("print")}${this.tb("preview")}${s}${this.tb("spell")}${this.tb("research")}${s}
          ${this.tb("cut")}${this.tb("copy")}${this.tb("paste")}${this.dd()}${this.tb("brush")}${s}${this.tb("undo")}${this.dd(true)}${this.tb("redo")}${this.dd(true)}${s}
          ${this.tb("link")}${this.tb("sum")}${this.dd(true)}${this.tb("sortaz")}${this.tb("sortza")}${s}${this.tb("chart")}${this.tb("draw")}
          <label class="box zoom"><select aria-label="zoom"><option>85%</option></select>${caret}</label>${this.tb("help")}${this.cap}
        </div>
        <div class="bar plain">
          ${this.tb("workbook")}
          <nav class="menu">${menu.map(([t, k]) => {
            const i = k.length - 2;
            return html`<button>${t}<span class="key">${k.slice(0, i)}<u>${k[i]}</u>)</span></button>`;
          })}</nav>
        </div>
        <div class="bar format">
          <label class="box font"><select aria-label="font"><option></option></select>${caret}</label>
          <label class="box size"><select aria-label="size"><option></option></select>${caret}</label>${s}
          <button class="tb">B</button><button class="tb"><i>I</i></button><button class="tb"><u>U</u></button>${s}
          ${["left", "center", "right", "merge"].map((n) => this.tb(n))}${s}${["money", "percent", "comma", "moredec", "lessdec"].map((n) => this.tb(n))}${s}
          ${this.tb("outdent")}${this.tb("indent")}${s}${this.tb("borders")}${this.dd()}${this.tb("fill")}${this.dd()}${this.tb("color")}${this.dd()}${this.cap}
        </div>
        <div class="bar pdf">${this.tb("pdf")}${this.tb("pdfmail")}${this.cap}</div>
      </div>
      <div class="formula">
        <input class="namebox" aria-label="name" .value=${"图片 35"} />
        <button class="name-dd" aria-label="names"><svg viewBox="0 0 7 4"><path d="M0 0h7L3.500 4z" /></svg></button>
        <span class="fx">fx</span>
        <input class="fx-input" aria-label="formula" />
      </div>
      <div class="sheet">
        <table>
          <colgroup><col width="31" />${columns.map(([c, w]) => (c ? html`<col width=${w} />` : html`<col />`))}</colgroup>
          <thead><tr><th></th>${columns.map(([c]) => html`<th>${c}</th>`)}</tr></thead>
          <tbody>${rows.map((r) => html`<tr><th>${r < 520 ? r : nothing}</th>${columns.map(([c]) => html`<td>${r === 502 && c === "B" ? html`<a href="#cut5">切割图5</a>` : nothing}</td>`)}</tr>`)}</tbody>
        </table>
        ${this.shot()}
      </div>
      <div class="tabs">
        <div class="nav">
          ${["M.5 0v8M6.500 0v8L2 4z", "M5 0v8L1 4z", "M2 0v8l4-4z", "M6.500 0v8M.5 0v8L5 4z"].map((d) => html`<button aria-label="scroll"><svg viewBox="0 0 7 8"><path d=${d} stroke="#000" stroke-width=".5" /></svg></button>`)}
        </div>
        ${sheets.map((t, i) => {
          const before = i < 3 ? tones[i] : sheets[i - 1] === this.sheet ? "#fff" : "#d4d0c8";
          const lead = i === 0 || t === this.sheet;
          return html`<button class=${classMap({ tab: true, record: i === 0, index: i === 1, active: t === this.sheet })} @click=${() => (this.sheet = t)}>
            <svg viewBox="0 0 10 14" fill="none" stroke="#222">${lead
              ? svg`<path d="M0 0h2l7 14H0z" fill=${before} stroke="none"/><path d="M2 0l7 14"/>`
              : svg`<path d="M0 0h9L2 14H0z" fill=${before} stroke="none"/><path d="M9 0L2 14M5 8l3 6"/>`}</svg>${t}</button>`;
        })}
      </div>
      <footer class="status">就绪</footer>
    </section>`;
  }

  render() {
    return html`<main class="desk">${this.viewer()}${this.excel()}</main>
      <svg class="arrows" aria-hidden="true">
        <path d="M314 544L381 520" stroke="#20e820" stroke-width="4" />
        <path d="M1094 581L334 627" stroke="#00ffff" stroke-width="5" stroke-linecap="round" />
        <path d="M308 628l27-8v16z" fill="#00ffff" />
        <path d="M385.500 120V688" stroke="#55534d" stroke-width="2" />
        <path d="M98 66v17l4-4 4 8 3-1-4-8h6z" fill="#fff" stroke="#000" />
      </svg>`;
  }
}
